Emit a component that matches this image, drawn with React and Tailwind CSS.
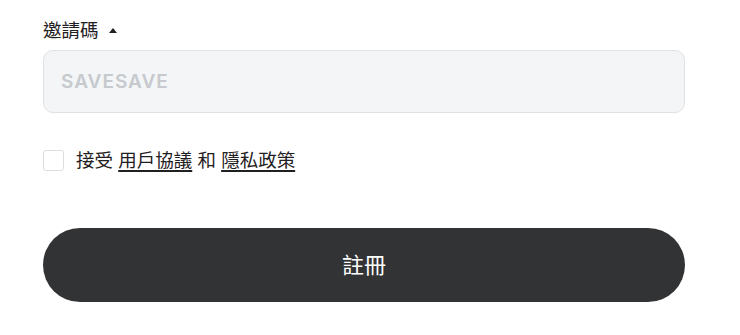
import React, { useState } from 'react';

const App = () => {
  const [agreed, setAgreed] = useState(false);

  return (
    <div className="w-[740px] h-[335px] bg-white px-[43px] pt-[18px] text-[#1f2022]" style={{ fontFamily: 'Inter, "Noto Sans CJK TC", sans-serif' }}>
      {/* Invite code label */}
      <div className="flex items-center gap-[10px] h-[24px]">
        <span className="text-[18.5px] leading-[24px]">邀請碼</span>
        <span className="w-0 h-0 border-l-[4px] border-r-[4px] border-b-[5px] border-l-transparent border-r-transparent border-b-[#1f2022]" />
      </div>

      {/* Invite code input */}
      <input
        type="text"
        placeholder="SAVESAVE"
        className="mt-[8px] w-[642px] h-[63px] rounded-[10px] border border-[#dfe1e4] bg-[#f3f5f7] px-[17px] text-[19px] font-semibold tracking-[1px] outline-none placeholder:text-[#c6c9cd]"
      />

      {/* Terms */}
      <label className="mt-[36px] flex items-center h-[22px] cursor-pointer">
        <input
          type="checkbox"
          checked={agreed}
          onChange={() => setAgreed(!agreed)}
          className="appearance-none w-[21px] h-[21px] rounded-[3px] border border-[#dcdee1] bg-white"
        />
        <span className="ml-[12px] text-[18.5px] leading-[22px]">
          接受 <a className="underline decoration-[1.5px] underline-offset-[3px]">用戶協議</a> 和 <a className="underline decoration-[1.5px] underline-offset-[3px]">隱私政策</a>
        </span>
      </label>

      {/* Submit */}
      <button className="mt-[57px] w-[642px] h-[74px] rounded-full bg-[#323335] text-white text-[22px]">
        註冊
      </button>
    </div>
  );
};

export default App;
